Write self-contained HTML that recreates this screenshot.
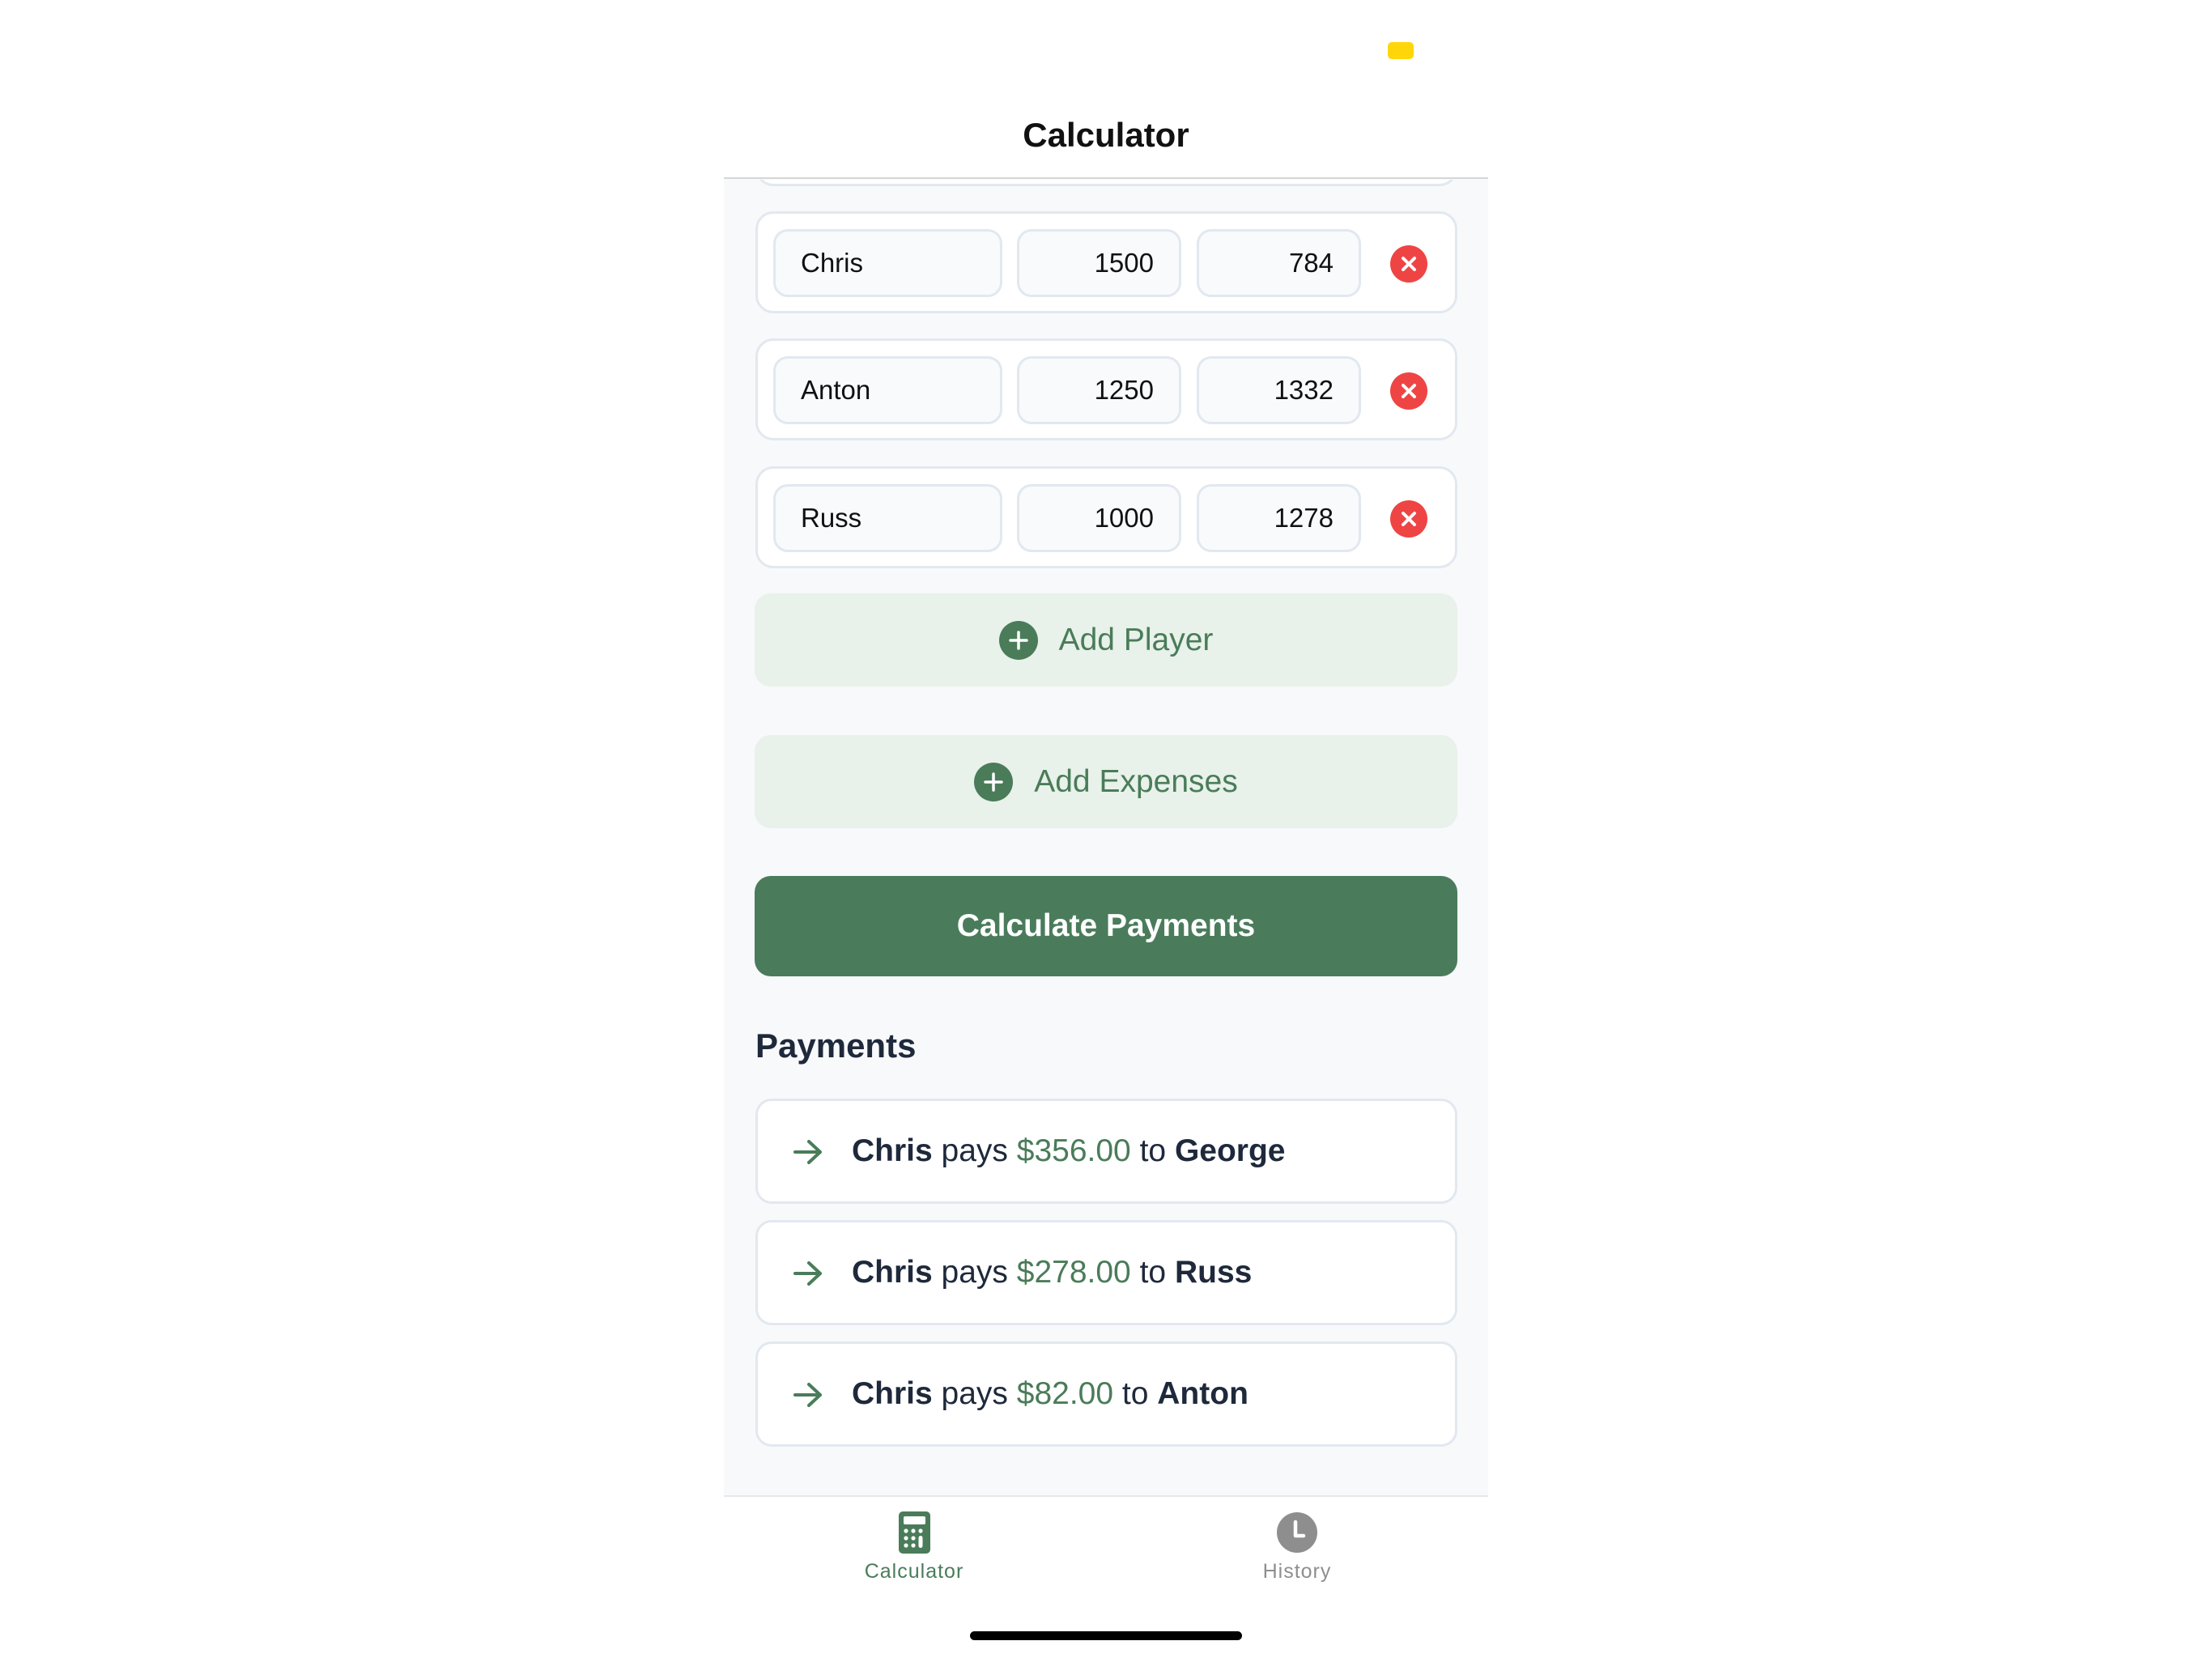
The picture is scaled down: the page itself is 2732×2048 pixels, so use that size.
<!DOCTYPE html>
<html><head><meta charset="utf-8"><style>
*{margin:0;padding:0;box-sizing:border-box}
body{width:2732px;height:2048px;background:#fff;font-family:"Liberation Sans",sans-serif;position:relative;overflow:hidden}
.a{position:absolute}
.card{position:absolute;left:933px;width:867px;background:#fff;border:3px solid #e2e8f0;border-radius:22px}
.inp{position:absolute;top:19px;height:84px;background:#f8fafc;border:3px solid #e2e8f0;border-radius:18px;font-size:33px;color:#111;line-height:78px}
.x{position:absolute;left:781px;top:39px;width:46px;height:46px;border-radius:50%;background:#ef4444}
.btn{position:absolute;left:932px;width:868px;border-radius:20px;display:flex;align-items:center;justify-content:center;font-size:39px}
.pay{position:absolute;left:933px;width:867px;height:130px;background:#fff;border:3px solid #e2e8f0;border-radius:20px;font-size:39px;color:#1e293b;line-height:124px}
.pay b{font-weight:bold}
.pay .g{color:#4a7c59;font-weight:normal}
</style></head><body>
<div class="a" style="left:894px;top:221px;width:944px;height:1626px;background:#f8f9fb"></div>
<div class="a" style="left:894px;top:0;width:944px;height:221px;background:#fff;border-bottom:2px solid #d4d6da"></div>
<div class="a" style="left:1714px;top:52px;width:32px;height:21px;background:#ffd60a;border-radius:5px"></div>
<div class="a" style="left:894px;top:143px;width:944px;text-align:center;font-size:42px;font-weight:bold;color:#111">Calculator</div>
<div class="a" style="left:933px;top:200px;width:867px;height:30px;border:3px solid #e2e8f0;border-top:none;border-radius:0 0 22px 22px;background:#fff;clip-path:inset(22px 0 0 0)"></div>

<div class="card" style="top:261px;height:126px">
 <div class="inp" style="left:19px;width:283px;padding-left:31px">Chris</div>
 <div class="inp" style="left:320px;width:203px;text-align:right;padding-right:31px">1500</div>
 <div class="inp" style="left:542px;width:203px;text-align:right;padding-right:31px">784</div>
 <svg class="x" viewBox="0 0 46 46"><path d="M16 16L30 30M30 16L16 30" stroke="#fff" stroke-width="4" stroke-linecap="round"/></svg>
</div>
<div class="card" style="top:418px;height:126px">
 <div class="inp" style="left:19px;width:283px;padding-left:31px">Anton</div>
 <div class="inp" style="left:320px;width:203px;text-align:right;padding-right:31px">1250</div>
 <div class="inp" style="left:542px;width:203px;text-align:right;padding-right:31px">1332</div>
 <svg class="x" viewBox="0 0 46 46"><path d="M16 16L30 30M30 16L16 30" stroke="#fff" stroke-width="4" stroke-linecap="round"/></svg>
</div>
<div class="card" style="top:576px;height:126px">
 <div class="inp" style="left:19px;width:283px;padding-left:31px">Russ</div>
 <div class="inp" style="left:320px;width:203px;text-align:right;padding-right:31px">1000</div>
 <div class="inp" style="left:542px;width:203px;text-align:right;padding-right:31px">1278</div>
 <svg class="x" viewBox="0 0 46 46"><path d="M16 16L30 30M30 16L16 30" stroke="#fff" stroke-width="4" stroke-linecap="round"/></svg>
</div>

<div class="btn" style="top:733px;height:115px;background:#e8f1ea;color:#4a7c59">
 <svg width="48" height="48" viewBox="0 0 48 48" style="margin-right:26px"><circle cx="24" cy="24" r="24" fill="#4a7c59"/><path d="M24 14V34M14 24H34" stroke="#fff" stroke-width="3.5" stroke-linecap="round"/></svg>Add Player</div>
<div class="btn" style="top:908px;height:115px;background:#e8f1ea;color:#4a7c59">
 <svg width="48" height="48" viewBox="0 0 48 48" style="margin-right:26px"><circle cx="24" cy="24" r="24" fill="#4a7c59"/><path d="M24 14V34M14 24H34" stroke="#fff" stroke-width="3.5" stroke-linecap="round"/></svg>Add Expenses</div>
<div class="btn" style="top:1082px;height:124px;background:#4a7c5c;color:#fff;font-weight:bold">Calculate Payments</div>

<div class="a" style="left:933px;top:1268px;font-size:42px;font-weight:bold;color:#1e293b">Payments</div>

<div class="pay" style="top:1357px"><svg class="a" style="left:43px;top:46px" width="38" height="34" viewBox="0 0 38 34"><path d="M3 17H34M20 4L34 17L20 30" fill="none" stroke="#4a7c59" stroke-width="4" stroke-linecap="round" stroke-linejoin="round"/></svg><span class="a" style="left:116px"><b>Chris</b> pays <b class="g">$356.00</b> to <b>George</b></span></div>
<div class="pay" style="top:1507px"><svg class="a" style="left:43px;top:46px" width="38" height="34" viewBox="0 0 38 34"><path d="M3 17H34M20 4L34 17L20 30" fill="none" stroke="#4a7c59" stroke-width="4" stroke-linecap="round" stroke-linejoin="round"/></svg><span class="a" style="left:116px"><b>Chris</b> pays <b class="g">$278.00</b> to <b>Russ</b></span></div>
<div class="pay" style="top:1657px"><svg class="a" style="left:43px;top:46px" width="38" height="34" viewBox="0 0 38 34"><path d="M3 17H34M20 4L34 17L20 30" fill="none" stroke="#4a7c59" stroke-width="4" stroke-linecap="round" stroke-linejoin="round"/></svg><span class="a" style="left:116px"><b>Chris</b> pays <b class="g">$82.00</b> to <b>Anton</b></span></div>

<div class="a" style="left:894px;top:1847px;width:944px;height:2px;background:#e5e7eb"></div>
<svg class="a" style="left:1110px;top:1867px" width="39" height="52" viewBox="0 0 39 52"><rect x="0" y="0" width="39" height="52" rx="5" fill="#4a7c59"/><rect x="6" y="6" width="27" height="10" rx="2" fill="#fff"/><g fill="#fff"><circle cx="9" cy="24" r="2.6"/><circle cx="18" cy="24" r="2.6"/><circle cx="27" cy="24" r="2.6"/><circle cx="9" cy="33" r="2.6"/><circle cx="18" cy="33" r="2.6"/><circle cx="9" cy="42" r="2.6"/><circle cx="18" cy="42" r="2.6"/><rect x="24.5" y="30" width="5" height="15" rx="2.5"/></g></svg>
<div class="a" style="left:1029px;top:1927px;width:200px;text-align:center;font-size:25px;color:#4a7c59;letter-spacing:1px">Calculator</div>
<svg class="a" style="left:1577px;top:1868px" width="50" height="50" viewBox="0 0 50 50"><circle cx="25" cy="25" r="25" fill="#8e8e8e"/><path d="M23 12V29H33" fill="none" stroke="#fff" stroke-width="4.5" stroke-linecap="round" stroke-linejoin="round"/></svg>
<div class="a" style="left:1502px;top:1927px;width:200px;text-align:center;font-size:25px;color:#8e8e8e;letter-spacing:1px">History</div>
<div class="a" style="left:1198px;top:2015px;width:336px;height:11px;border-radius:6px;background:#000"></div>
</body></html>
